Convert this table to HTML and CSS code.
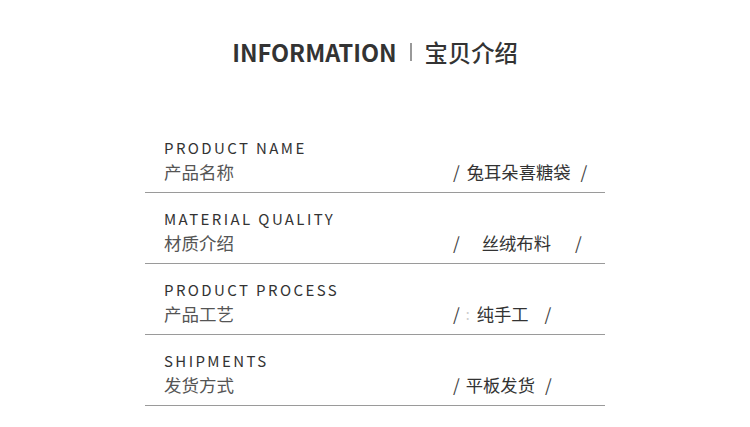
FILE: index.html
```html
<!DOCTYPE html>
<html lang="zh">
<head>
<meta charset="utf-8">
<link rel="stylesheet" href="styles.css">
</head>
<body>
<div class="page">
  <h1 class="title"><span class="en">INFORMATION</span><span class="sep"></span><span class="zh">宝贝介绍</span></h1>
  <div class="list">
    <div class="row">
      <div class="en-label">PRODUCT NAME</div>
      <div class="zh-label">产品名称</div>
      <div class="value v1"><span class="sl">/</span><span class="txt">兔耳朵喜糖袋</span><span class="sl">/</span></div>
    </div>
    <div class="row">
      <div class="en-label">MATERIAL QUALITY</div>
      <div class="zh-label">材质介绍</div>
      <div class="value v2"><span class="sl">/</span><span class="txt">丝绒布料</span><span class="sl">/</span></div>
    </div>
    <div class="row">
      <div class="en-label">PRODUCT PROCESS</div>
      <div class="zh-label">产品工艺</div>
      <div class="value v3"><span class="sl">/</span><span class="colon">:</span><span class="txt">纯手工</span><span class="sl">/</span></div>
    </div>
    <div class="row">
      <div class="en-label">SHIPMENTS</div>
      <div class="zh-label">发货方式</div>
      <div class="value v4"><span class="sl">/</span><span class="txt">平板发货</span><span class="sl">/</span></div>
    </div>
  </div>
</div>
</body>
</html>
```
FILE: styles.css
```css
* { box-sizing: border-box; }
html, body { margin: 0; padding: 0; background: #fff; }
body { font-family: "Noto Sans CJK SC", "Noto Sans", sans-serif; color: #333; }
.page { width: 750px; height: 427px; overflow: hidden; }
.title {
  margin: 0;
  padding-top: 35px;
  display: flex;
  justify-content: center;
  align-items: center;
  font-weight: 700;
  line-height: 34px;
}
.title .en { font-size: 23.5px; color: #333; }
.title .sep { width: 2px; height: 18px; background: #999; margin: 0 13px 0 13px; }
.title .zh { font-size: 23.3px; font-weight: 500; color: #333; }
.list { width: 460px; margin: 0 auto; padding-top: 53px; }
.row {
  display: grid;
  grid-template-columns: 291px auto;
  align-content: start;
  padding-left: 19px;
  padding-top: 16px;
  height: 71px;
  border-bottom: 1px solid #9a9a9a;
}
.en-label {
  grid-column: 1 / 3;
  font-size: 15px;
  line-height: 20px;
  letter-spacing: 2.4px;
  color: #333;
}
.zh-label { font-size: 17.5px; line-height: 28px; color: #555; }
.value { font-size: 17.3px; line-height: 28px; color: #333; display: flex; margin-left: -2px; }
.value .sl { color: #444; }
.value .colon { color: #ccc; margin-left: 6px; font-size: 14px; }
.v1 .txt { margin: 0 10px 0 7px; }
.v2 .txt { margin: 0 24px 0 22px; }
.v3 .txt { margin: 0 16px 0 7px; }
.v4 .txt { margin: 0 10px 0 6px; }
```
